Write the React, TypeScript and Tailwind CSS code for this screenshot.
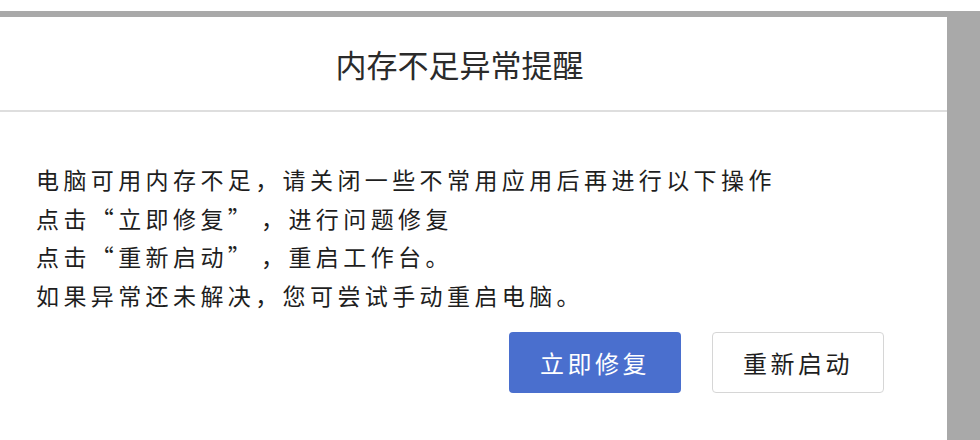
import React from "react";

const font = { fontFamily: '"Noto Sans CJK SC", "Noto Sans", sans-serif' };

const lines = [
  "电脑可用内存不足，请关闭一些不常用应用后再进行以下操作",
  "点击“立即修复”\u200a，进行问题修复",
  "点击“重新启动”\u200a，重启工作台。",
  "如果异常还未解决，您可尝试手动重启电脑。",
];

const App = () => {
  return (
    <div
      className="flex h-[440px] w-[980px] flex-col overflow-hidden bg-white"
      style={font}
    >
      <div className="h-[11px] shrink-0 bg-white" />
      <div className="flex flex-1 bg-[#a9a9a9] pt-[6px]">
        <div className="flex w-[947px] flex-col bg-white">
          {/* header */}
          <div className="flex h-[95px] shrink-0 items-center justify-center border-b-2 border-[#dedede] pr-[28px]">
            <h2 className="text-[31px] font-normal leading-none text-[#2b2b2b]">
              内存不足异常提醒
            </h2>
          </div>

          {/* body */}
          <div className="flex flex-col pl-[36px] pr-[63px] pt-[48px]">
            <div className="whitespace-pre text-[23px] leading-[38.5px] tracking-[4.4px] text-[#1e1e1e]">
              {lines.map((l) => (
                <p key={l}>{l}</p>
              ))}
            </div>
            <div className="mt-[18px] flex justify-end gap-[31px]">
              <button className="flex h-[61px] w-[172px] items-center justify-center rounded-[4px] bg-[#4a6fce] text-[24px] tracking-[3.5px] text-white">
                立即修复
              </button>
              <button className="flex h-[61px] w-[172px] items-center justify-center rounded-[4px] border border-[#d6d6d6] bg-white text-[24px] tracking-[3.5px] text-[#1e1e1e]">
                重新启动
              </button>
            </div>
          </div>
        </div>
      </div>
    </div>
  );
};

export default App;
